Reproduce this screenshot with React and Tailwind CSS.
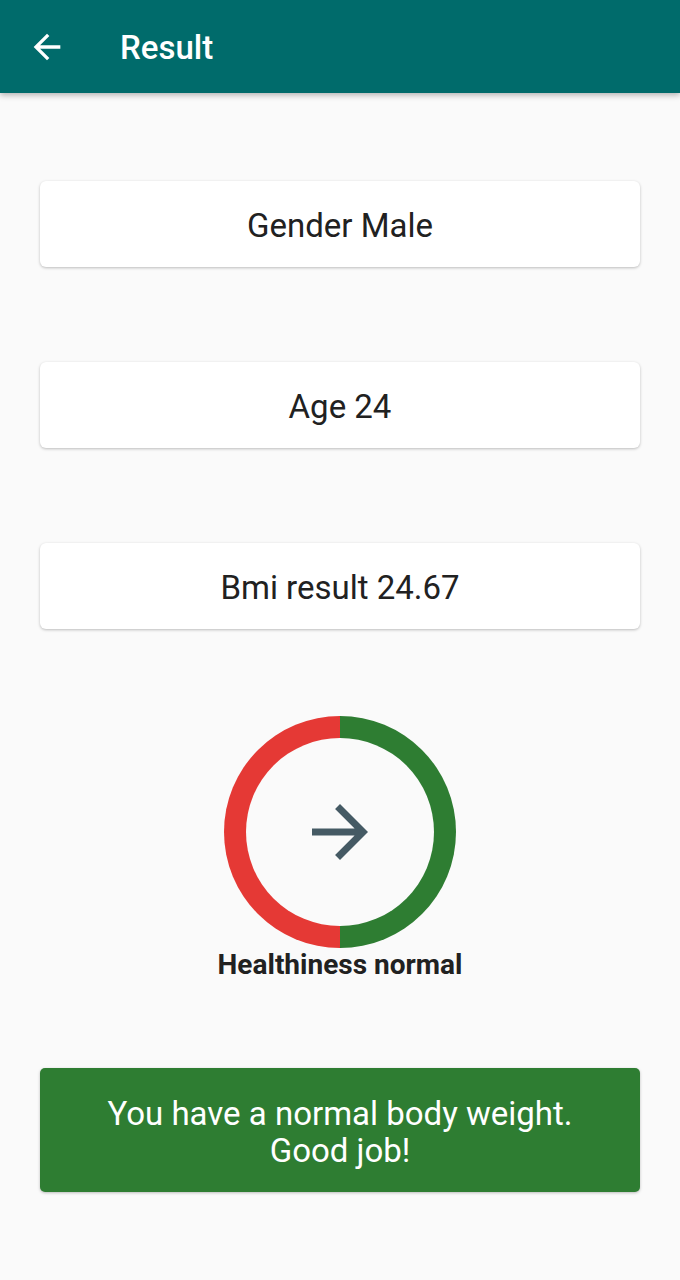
const InfoCard = ({ children }) => (
  <div className="h-[86px] pt-[3px] bg-white rounded-[6px] shadow-[0_1px_3px_rgba(0,0,0,0.25)] flex items-center justify-center text-[33px] text-[#212121]">
    {children}
  </div>
);

const App = () => {
  return (
    <div
      className="w-[680px] h-[1280px] bg-[#fafafa] flex flex-col"
      style={{ fontFamily: "Roboto, 'Noto Sans', sans-serif" }}
    >
      <header className="h-[93px] bg-[#006b6b] flex items-center shadow-[0_2px_6px_rgba(0,0,0,0.3)] relative z-10">
        <svg viewBox="0 0 24 24" className="w-[40px] h-[40px] ml-[27px]" fill="#ffffff">
          <path d="M20 11H7.83l5.59-5.59L12 4l-8 8 8 8 1.41-1.41L7.83 13H20v-2z" />
        </svg>
        <h1 className="ml-[53px] pt-[2px] text-[33px] font-medium text-white">Result</h1>
      </header>

      <main className="px-[40px] pt-[88px] flex flex-col">
        <div className="flex flex-col gap-[95px]">
          <InfoCard>Gender Male</InfoCard>
          <InfoCard>Age 24</InfoCard>
          <InfoCard>Bmi result 24.67</InfoCard>
        </div>

        <div className="mt-[87px] flex flex-col items-center">
          <div className="w-[232px] h-[232px] rounded-full bg-[linear-gradient(to_right,#e53935_50%,#2e7d32_50%)] flex items-center justify-center">
            <div className="w-[188px] h-[188px] rounded-full bg-[#fafafa] flex items-center justify-center">
              <svg viewBox="0 0 24 24" className="w-[84px] h-[84px]" fill="#455a64">
                <path d="M12 4l-1.41 1.41L16.17 11H4v2h12.17l-5.58 5.59L12 20l8-8z" />
              </svg>
            </div>
          </div>
          <p className="mt-[1px] text-[28px] font-bold text-[#212121] leading-[32px]">Healthiness normal</p>
        </div>

        <div className="mt-[87px] h-[124px] pt-[3px] bg-[#2e7d32] rounded-[5px] shadow-[0_1px_3px_rgba(0,0,0,0.25)] flex items-center justify-center text-center text-white text-[33px] leading-[37px]">
          You have a normal body weight.
          <br />
          Good job!
        </div>
      </main>
    </div>
  );
};

export default App;
